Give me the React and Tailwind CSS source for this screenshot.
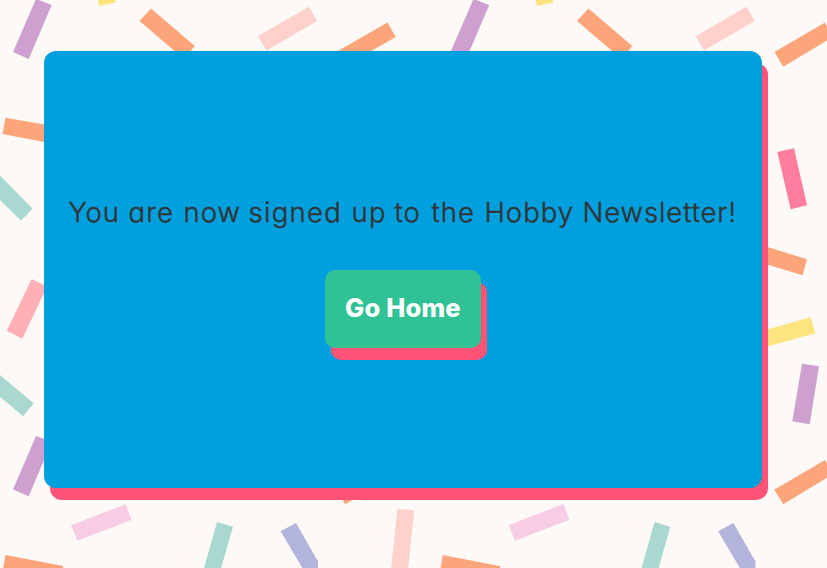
const confetti = [
  ["#cda0cf", "36,-1 51.7,5 28.7,59 13,52"],
  ["#fde47f", "97.5,-2 99.5,6 116,2.5 115,-2"],
  ["#fca57a", "151,8.5 194.8,46 184,59 139.5,21"],
  ["#ffd1cb", "258,36 309,6.8 317,21 266.5,50.5"],
  ["#fca57a", "387.5,22.5 395.7,37 345,66 337,51.5"],
  ["#cda0cf", "473.5,-1 489.2,5 466.2,59 450.5,52"],
  ["#fde47f", "535,-2 537,6 553.5,2.5 552,-2"],
  ["#fca57a", "588.5,8.5 632.3,46 621.5,59 577,21"],
  ["#ffd1cb", "695.7,36 746.5,6.8 754.5,21 704,50.5"],
  ["#fca57a", "774.5,52 825,22.5 833,37 783.3,66.7"],
  ["#fca57a", "5.5,117.7 62,127.5 60,145 2.5,134"],
  ["#a8d8d0", "-2,173.5 32.7,208.7 21,220.7 -2,198"],
  ["#ffb0b5", "31.7,279 47,286.5 22.3,338.7 6.7,330.7"],
  ["#a8d8d0", "-2,373.3 33.7,403.3 23,416.2 -2,395"],
  ["#cda0cf", "36,436 51.7,442 28.7,496.3 13,489.5"],
  ["#f7cce5", "71,525.3 125.7,504.3 131.5,519.7 77.5,540.7"],
  ["#f7cce5", "508.7,525.3 563.3,504 569.2,519.7 515,540.7"],
  ["#fca57a", "5.5,555 63.3,566 61,582 2.5,571"],
  ["#fca57a", "442.8,555 500.5,566.3 498,582 440,571"],
  ["#a8d8d0", "217,522 233,526.7 220.5,570 203.5,570"],
  ["#a8d8d0", "654.5,522 670.3,526.7 658,570 641,570"],
  ["#b3b4db", "280.7,531.3 296,523 318,561.5 318,570 303.5,570"],
  ["#b3b4db", "718.2,531.3 733.3,523 755.5,561.5 755.5,570 741,570"],
  ["#ffd1cb", "397.3,509 414.2,510.3 408,570 391,570"],
  ["#fca57a", "340,496 345.3,504.3 360,496"],
  ["#cda0cf", "802,363.7 819,366.3 809.7,424.2 792.3,421.3"],
  ["#fca57a", "774.3,489.7 825,460 833,474 783.3,504.2"],
  ["#ff7d9d", "777.3,152 794,148.3 807,205.3 790.7,209.2"],
  ["#fca57a", "760,244.5 807,259.3 802.7,275.3 760,262.5"],
  ["#fde47f", "760,331.5 810.7,317.2 815.3,333.3 760,348.5"],
];

const words = [
  ["You", "w-[60px] tracking-[0.9px]"],
  ["are", "w-[55px] tracking-[1.3px]"],
  ["now", "w-[65px] tracking-[1px]"],
  ["signed", "w-[103px] tracking-[1.3px]"],
  ["up", "w-[43px] tracking-[1.2px]"],
  ["to", "w-[37px] tracking-[1px]"],
  ["the", "w-[53px] tracking-[1.1px]"],
  ["Hobby", "w-[98px] tracking-[1px]"],
  ["Newsletter!", "w-[154px] tracking-[0.9px]"],
];

function Confetti() {
  return (
    <svg className="absolute inset-0 h-[568px] w-[827px]" viewBox="0 0 827 568" aria-hidden="true">
      {confetti.map(([fill, points]) => (
        <polygon key={points} fill={fill} points={points} />
      ))}
    </svg>
  );
}

export default function App() {
  return (
    <div className="relative h-[568px] w-full overflow-hidden bg-[#fcf9f6] pt-[51px] pl-11 font-[Inter,sans-serif]">
      <Confetti />
      <main className="relative flex h-[437px] w-[718px] flex-col rounded-xl bg-[#009fde] pt-[140px] shadow-[6px_12px_0_#fc5377]">
        <p className="flex h-[42px] pl-[24.5px] text-[27.5px] leading-[42px] font-light whitespace-nowrap text-[#333] [-webkit-text-stroke:0.4px_#333] [font-feature-settings:'cv11','calt'_0]">
          {words.map(([word, width]) => (
            <span key={word} className={width}>{word}{" "}</span>
          ))}
        </p>
        <button className="mt-[37px] ml-[281px] h-[78px] w-[156px] rounded-[10px] bg-[#30c195] pb-px text-[25.5px] font-extrabold tracking-[0.2px] whitespace-nowrap text-white shadow-[6px_12px_0_#fc5377]">
          Go Home
        </button>
      </main>
    </div>
  );
}
